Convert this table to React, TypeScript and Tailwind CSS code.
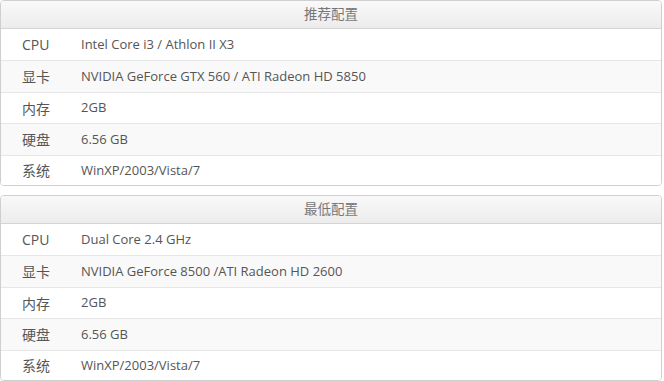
const recommended = [
  ['CPU', 'Intel Core i3 / Athlon II X3'],
  ['显卡', 'NVIDIA GeForce GTX 560 / ATI Radeon HD 5850'],
  ['内存', '2GB'],
  ['硬盘', '6.56 GB'],
  ['系统', 'WinXP/2003/Vista/7'],
]

const minimum = [
  ['CPU', 'Dual Core 2.4 GHz'],
  ['显卡', 'NVIDIA GeForce 8500 /ATI Radeon HD 2600'],
  ['内存', '2GB'],
  ['硬盘', '6.56 GB'],
  ['系统', 'WinXP/2003/Vista/7'],
]

// row heights incl. top border, measured off the screenshot
const rowClass = [
  'h-[31px] bg-white',
  'h-[32px] border-t border-[#e6e6e6] bg-[#f9f9f9]',
  'h-[31px] border-t border-[#e6e6e6] bg-white',
  'h-[32px] border-t border-[#e6e6e6] bg-[#f9f9f9]',
  'h-[30px] border-t border-[#e6e6e6] bg-white',
]

function SpecTable({ title, rows }: { title: string; rows: string[][] }) {
  return (
    <div className="w-[662px] border border-[#cfcfcf] rounded-[4px] overflow-hidden bg-white">
      <div className="h-[28px] flex items-center justify-center bg-gradient-to-b from-[#f9f9f9] to-[#ececec] border-b border-[#d4d4d4] text-[13.5px] text-[#777]">
        {title}
      </div>
      {rows.map(([label, value], i) => (
        <div key={label} className={`flex items-center ${rowClass[i]}`}>
          <span className="w-[80px] pl-[21px] text-[14px] text-[#555]">{label}</span>
          <span className="text-[13px] text-[#555]">{value}</span>
        </div>
      ))}
    </div>
  )
}

export default function App() {
  return (
    <main
      className="w-[664px] h-[381px] overflow-hidden bg-white flex flex-col gap-[9px]"
      style={{ fontFamily: '"Open Sans", "Noto Sans CJK SC", sans-serif' }}
    >
      <SpecTable title="推荐配置" rows={recommended} />
      <SpecTable title="最低配置" rows={minimum} />
    </main>
  )
}
